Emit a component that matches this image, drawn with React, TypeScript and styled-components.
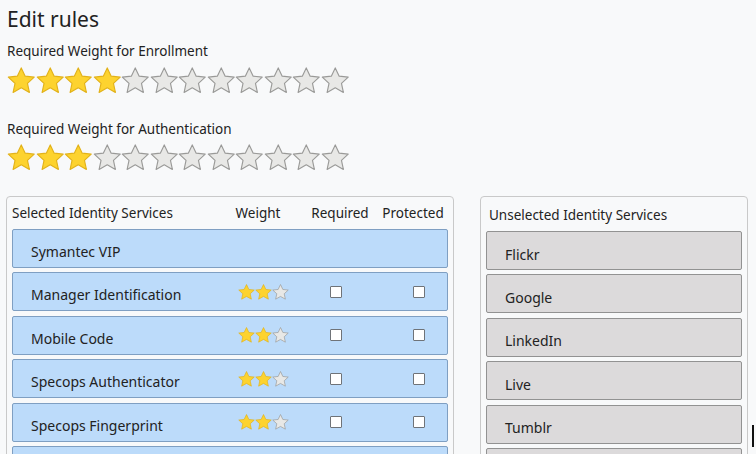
import React from "react";
import styled, { createGlobalStyle } from "styled-components";

const Global = createGlobalStyle`
  html, body { margin: 0; padding: 0; background: #f8f9fa; overflow: hidden; }
  body { font-family: "Noto Sans", "Open Sans", sans-serif; color: #222; }
  * { box-sizing: border-box; }
`;

const Page = styled.div`
  position: relative;
  width: 756px;
  height: 454px;
  padding: 4px 0 0 7px;
  overflow: hidden;
`;

const Title = styled.h1`
  margin: 0;
  font-size: 21px;
  font-weight: 400;
  line-height: 30px;
  color: #222;
`;

const Label = styled.div<{ $top: number }>`
  margin-top: ${(p) => p.$top}px;
  font-size: 13.5px;
  line-height: 18px;
  color: #222;
`;

const StarRow = styled.div<{ $top: number }>`
  display: flex;
  margin-top: ${(p) => p.$top}px;
  height: 30px;
  align-items: center;
`;

const StarSvg = styled.svg<{ $w: number }>`
  width: ${(p) => p.$w}px;
  height: ${(p) => p.$w * 0.95}px;
  flex: none;
  display: block;
`;

const STAR =
  "M12 1.6 L15.1 8.1 L22.2 8.9 L16.9 13.8 L18.4 20.9 L12 17.3 L5.6 20.9 L7.1 13.8 L1.8 8.9 L8.9 8.1 Z";

function Star({ on, size }: { on: boolean; size: number }) {
  return (
    <StarSvg $w={size} viewBox="0.8 0.9 22.4 21.3">
      <path
        d={STAR}
        fill={on ? "#fdd32f" : "#e8e8e6"}
        stroke={on ? "#e2b21a" : "#9a9a98"}
        strokeWidth={0.9}
        strokeLinejoin="round"
      />
    </StarSvg>
  );
}

function Rating({ value, total, size }: { value: number; total: number; size: number }) {
  return (
    <>
      {Array.from({ length: total }, (_, i) => (
        <Star key={i} on={i < value} size={size} />
      ))}
    </>
  );
}

const Panels = styled.div`
  display: flex;
  gap: 26px;
  margin-top: 23px;
  margin-left: -1px;
`;

const Panel = styled.div<{ $w: number }>`
  width: ${(p) => p.$w}px;
  height: 300px;
  border: 1px solid #c9c9c9;
  border-radius: 4px;
  padding: 0 5px;
  background: #f8f9fa;
`;

const LeftHeader = styled.div`
  display: grid;
  grid-template-columns: 212px 68px 96px 50px;
  height: 32px;
  align-items: center;
  font-size: 13.5px;
  color: #222;
  & > span:not(:first-child) {
    justify-self: center;
    white-space: nowrap;
  }
`;

const RightHeader = styled.div`
  height: 34px;
  display: flex;
  align-items: center;
  padding: 1px 0 0 3px;
  font-size: 13.5px;
  color: #222;
`;

const List = styled.div<{ $gap: number }>`
  display: flex;
  flex-direction: column;
  gap: ${(p) => p.$gap}px;
`;

const SelRow = styled.div`
  display: grid;
  grid-template-columns: 211px 78px 68px 22px 54px;
  align-items: center;
  height: 39px;
  background: #bcdbfa;
  border: 1px solid #7f9fc2;
  border-radius: 2px;
  font-size: 14px;
  color: #222;
`;

const RowName = styled.span`
  padding: 6px 0 0 18px;
  white-space: nowrap;
`;

const Cell = styled.span<{ $col: number }>`
  grid-column: ${(p) => p.$col};
  display: flex;
  justify-content: center;
  align-items: center;
`;

const Check = styled.span`
  width: 12px;
  height: 12px;
  background: #fff;
  border: 1px solid #6f7378;
  border-radius: 1px;
`;

const UnRow = styled.div`
  height: 39px;
  display: flex;
  align-items: center;
  padding: 7px 0 0 18px;
  background: #dcdadb;
  border: 1px solid #929292;
  border-radius: 2px;
  font-size: 14px;
  color: #222;
`;

const Caret = styled.div`
  position: absolute;
  left: 752px;
  top: 425px;
  width: 1.5px;
  height: 22px;
  background: #111;
`;

const selected = [
  { name: "Symantec VIP", rated: false },
  { name: "Manager Identification", rated: true },
  { name: "Mobile Code", rated: true },
  { name: "Specops Authenticator", rated: true },
  { name: "Specops Fingerprint", rated: true },
  { name: "", rated: false },
];

const unselected = ["Flickr", "Google", "LinkedIn", "Live", "Tumblr", ""];

export default function App() {
  return (
    <Page>
      <Global />
      <Title>Edit rules</Title>
      <Label $top={8}>Required Weight for Enrollment</Label>
      <StarRow $top={6}>
        <Rating value={4} total={12} size={28.5} />
      </StarRow>
      <Label $top={24}>Required Weight for Authentication</Label>
      <StarRow $top={5}>
        <Rating value={3} total={12} size={28.5} />
      </StarRow>
      <Panels>
        <Panel $w={448}>
          <LeftHeader>
            <span>Selected Identity Services</span>
            <span>Weight</span>
            <span>Required</span>
            <span>Protected</span>
          </LeftHeader>
          <List $gap={4.4}>
            {selected.map((s, i) => (
              <SelRow key={i}>
                <RowName>{s.name}</RowName>
                {s.rated && (
                  <>
                    <Cell $col={2}>
                      <Rating value={2} total={3} size={17} />
                    </Cell>
                    <Cell $col={3}>
                      <Check />
                    </Cell>
                    <Cell $col={5}>
                      <Check />
                    </Cell>
                  </>
                )}
              </SelRow>
            ))}
          </List>
        </Panel>
        <Panel $w={268}>
          <RightHeader>Unselected Identity Services</RightHeader>
          <List $gap={4.4}>
            {unselected.map((u, i) => (
              <UnRow key={i}>{u}</UnRow>
            ))}
          </List>
        </Panel>
      </Panels>
      <Caret />
    </Page>
  );
}
